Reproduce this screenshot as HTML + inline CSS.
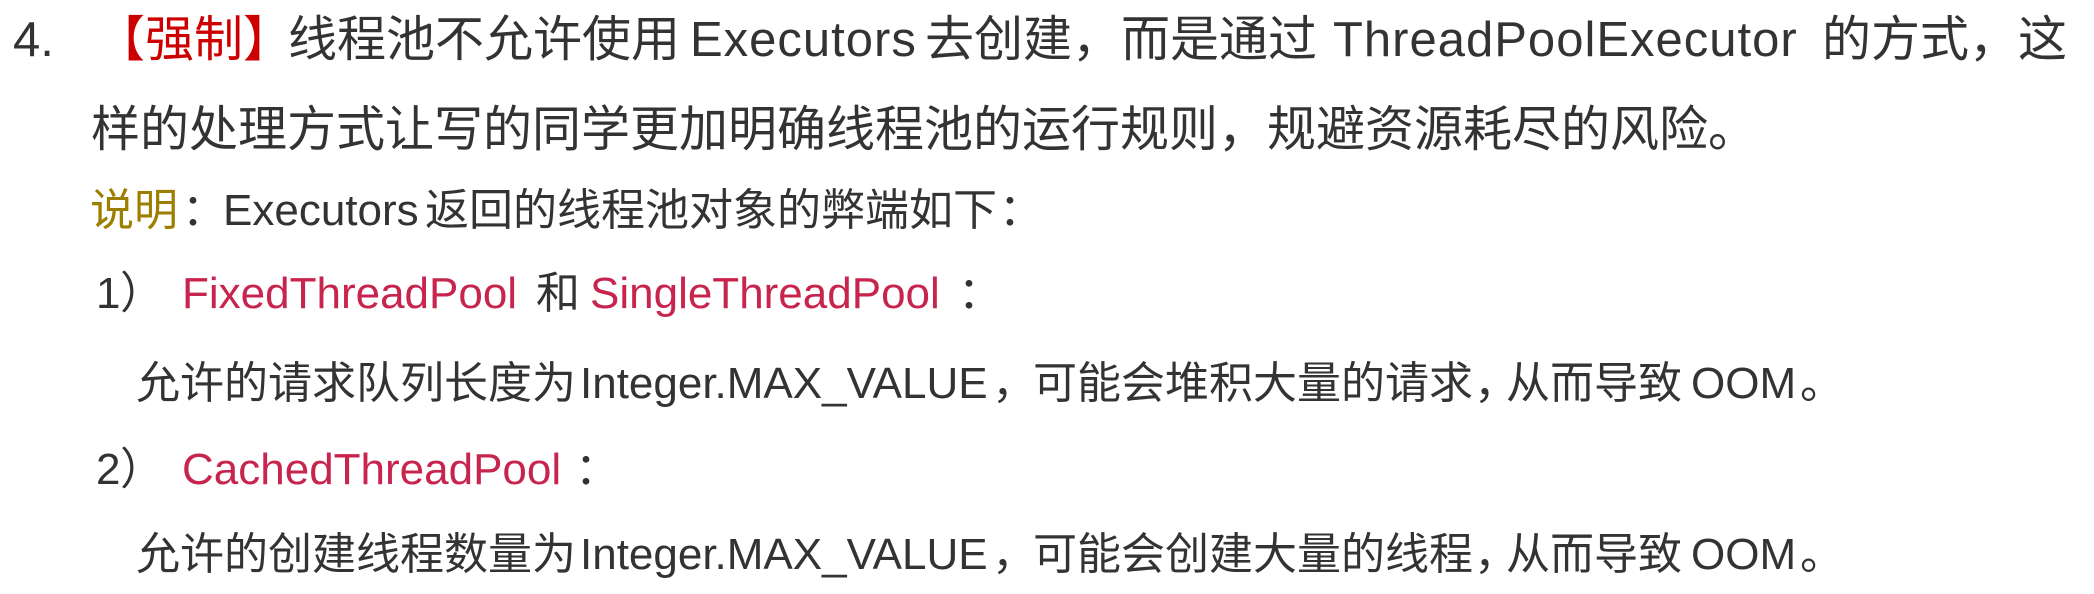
<!DOCTYPE html>
<html><head><meta charset="utf-8"><style>
body{margin:0;width:2094px;height:594px;background:#fff;overflow:hidden;position:relative;font-family:"Liberation Sans","Noto Sans CJK SC",sans-serif;color:#333}
.l{position:absolute;left:0;width:2094px;height:60px;line-height:60px}
.l span{position:absolute;top:0;white-space:nowrap}
.a{font-size:49px}.d{font-size:44px}
.r{color:#c00}.o{color:#9c7f00}.c{color:#c7254e}
.ls{letter-spacing:1px}
</style></head><body>
<div class="l a" style="top:10px">
<span style="left:13px">4.</span>
<span class="r" style="left:96px">【强制】</span>
<span style="left:288px">线程池不允许使用</span>
<span class="ls" style="left:690px">Executors</span>
<span style="left:925px">去创建，而是通过</span>
<span class="ls" style="left:1333px">ThreadPoolExecutor</span>
<span style="left:1822px">的方式，这</span>
</div>
<div class="l a" style="top:100px">
<span style="left:91px">样的处理方式让写的同学更加明确线程池的运行规则，规避资源耗尽的风险。</span>
</div>
<div class="l d" style="top:181px">
<span class="o" style="left:90px">说明</span>
<span style="left:182px">：</span>
<span style="left:223px">Executors</span>
<span style="left:425px">返回的线程池对象的弊端如下</span>
<span style="left:999px">：</span>
</div>
<div class="l d" style="top:264px">
<span style="left:96px">1</span>
<span style="left:120px">）</span>
<span class="c" style="left:182px">FixedThreadPool</span>
<span style="left:536px">和</span>
<span class="c" style="left:590px">SingleThreadPool</span>
<span style="left:958px">：</span>
</div>
<div class="l d" style="top:354px">
<span style="left:136px">允许的请求队列长度为</span>
<span style="left:580px">Integer.MAX_VALUE</span>
<span style="left:992px">，</span>
<span style="left:1033px">可能会堆积大量的请求</span>
<span style="left:1474px">，</span>
<span style="left:1506px">从而导致</span>
<span style="left:1691px">OOM</span>
<span style="left:1800px">。</span>
</div>
<div class="l d" style="top:440px">
<span style="left:96px">2</span>
<span style="left:120px">）</span>
<span class="c" style="left:182px">CachedThreadPool</span>
<span style="left:575px">：</span>
</div>
<div class="l d" style="top:525px">
<span style="left:136px">允许的创建线程数量为</span>
<span style="left:580px">Integer.MAX_VALUE</span>
<span style="left:992px">，</span>
<span style="left:1033px">可能会创建大量的线程</span>
<span style="left:1474px">，</span>
<span style="left:1506px">从而导致</span>
<span style="left:1691px">OOM</span>
<span style="left:1800px">。</span>
</div>
</body></html>
